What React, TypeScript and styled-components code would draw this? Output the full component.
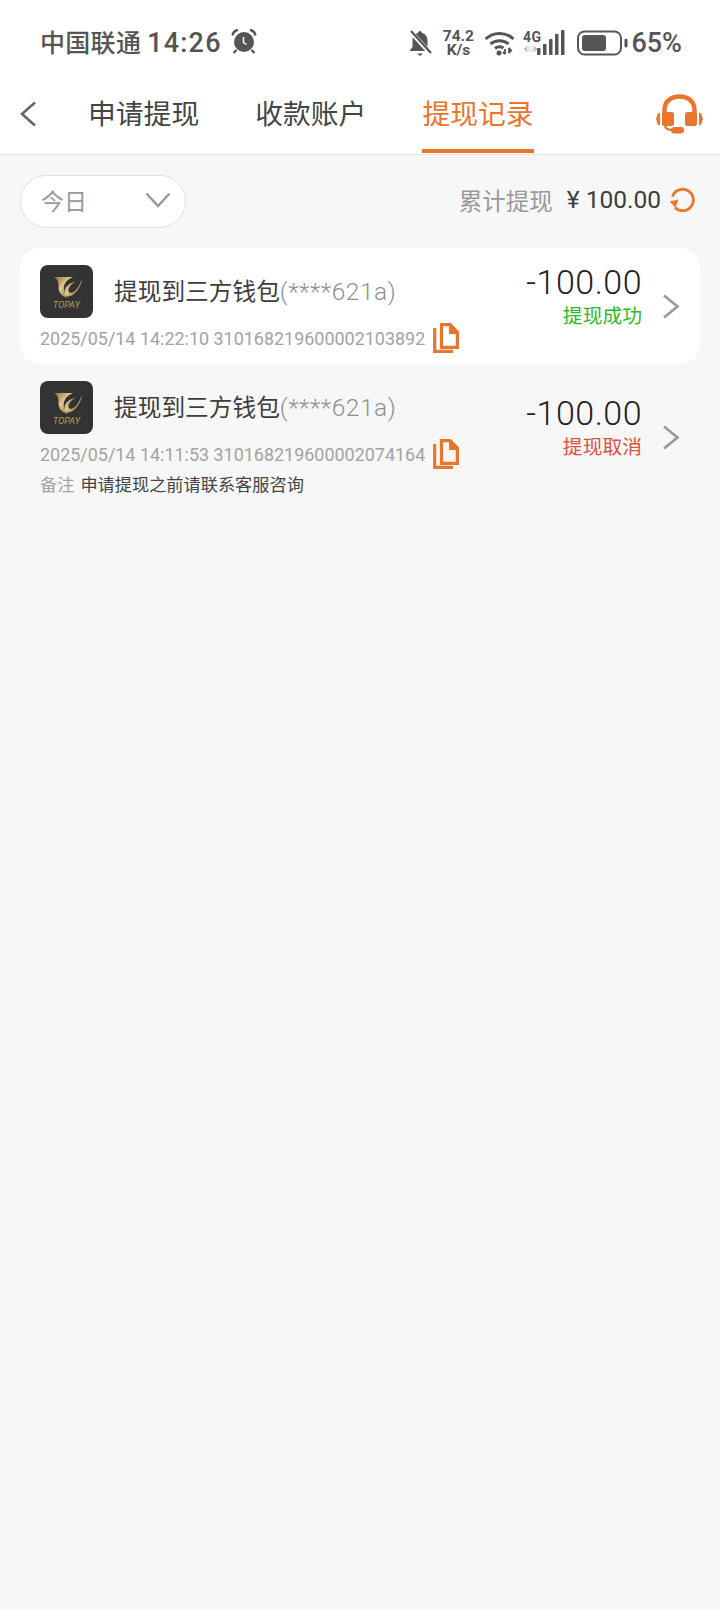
import React from 'react'
import styled, { createGlobalStyle } from 'styled-components'

const ORANGE = '#e8762d'
const FONT = `Roboto, "Noto Sans CJK SC", sans-serif`

const GlobalStyle = createGlobalStyle`
  html, body {
    margin: 0;
    padding: 0;
    background: #f7f7f7;
  }
  body {
    font-family: ${FONT};
  }
  * {
    box-sizing: border-box;
  }
`

const Page = styled.div`
  width: 720px;
  min-height: 1610px;
  background: #f7f7f7;
`

const Header = styled.header`
  background: #fff;
  border-bottom: 1px solid #e4e4e4;
`

const StatusBar = styled.div`
  height: 80px;
  padding: 2px 38px 0 40px;
  display: flex;
  align-items: center;
  justify-content: space-between;
  color: #555;
`

const StatusLeft = styled.div`
  display: flex;
  align-items: center;
  gap: 9px;
`

const Carrier = styled.span`
  font-size: 25px;
  font-weight: 500;
  letter-spacing: 0.3px;
`

const Clock = styled.span`
  margin-left: 6px;
  font-size: 27px;
  font-weight: 500;
  letter-spacing: 1.2px;
`

const StatusRight = styled.div`
  display: flex;
  align-items: center;
  padding-top: 3px;
`

const Speed = styled.div`
  width: 36px;
  margin: 0 8px 0 7px;
  font-weight: 700;
  text-align: center;
`

const SpeedLine = styled.span`
  display: block;
  font-size: 15.5px;
  line-height: 14px;
`

const WifiSlot = styled.span`
  display: flex;
  margin-right: 7px;
`

const SignalSlot = styled.span`
  display: flex;
  margin-right: 10px;
`

const Percent = styled.span`
  font-size: 27px;
  font-weight: 500;
  margin-left: 2px;
`

const Nav = styled.nav`
  height: 74px;
  padding: 0 17px 0 20px;
  display: flex;
  align-items: stretch;
`

const BackButton = styled.div`
  width: 68px;
  display: flex;
  align-items: center;
  padding-bottom: 6px;
`

const Tabs = styled.div`
  flex: 1;
  display: flex;
  gap: 56px;
`

const Tab = styled.div<{ $active?: boolean }>`
  display: flex;
  align-items: center;
  padding-bottom: 5px;
  font-size: 27.8px;
  color: ${(p) => (p.$active ? ORANGE : '#444')};
  border-bottom: 4px solid ${(p) => (p.$active ? ORANGE : 'transparent')};
  margin-bottom: 1px;
`

const HeadsetBox = styled.div`
  display: flex;
  align-items: center;
  padding-bottom: 6px;
`

const FilterBar = styled.div`
  padding: 20px 24px 20px 20px;
  display: flex;
  align-items: center;
  justify-content: space-between;
`

const DateSelect = styled.div`
  width: 166px;
  height: 53px;
  padding: 0 14px 3px 20px;
  background: #fff;
  border: 1.5px solid #e0e0e0;
  border-radius: 27px;
  display: flex;
  align-items: center;
  justify-content: space-between;
  font-size: 23px;
  color: #999;
`

const Total = styled.div`
  display: flex;
  align-items: center;
  padding-bottom: 4px;
  font-size: 23.5px;
  color: #999;
`

const TotalAmount = styled.span`
  margin: 0 8px 0 14px;
  font-size: 24.5px;
  color: #3d3d3d;
`

const Yen = styled.span`
  margin-right: 6px;
`

const List = styled.div`
  margin: 0 20px;
`

const Record = styled.div<{ $plain?: boolean }>`
  padding: 17px 20px 11px 20px;
  display: flex;
  align-items: center;
  background: ${(p) => (p.$plain ? 'transparent' : '#fff')};
  border-radius: 20px;
`

const Main = styled.div`
  flex: 1;
  min-width: 0;
`

const TitleRow = styled.div`
  display: flex;
  align-items: center;
  gap: 21px;
`

const Title = styled.div`
  padding-bottom: 4px;
  font-size: 23.7px;
  color: #3d3d3d;
  white-space: nowrap;
`

const Account = styled.span`
  font-size: 24.5px;
  font-weight: 300;
  letter-spacing: 0.5px;
  color: #909090;
`

const MetaRow = styled.div`
  margin-top: 5px;
  height: 30px;
  display: flex;
  align-items: center;
  gap: 8px;
  font-size: 17.95px;
  color: #a3a3a3;
  white-space: nowrap;
`

const Note = styled.div`
  margin-top: 2px;
  line-height: 28px;
  font-size: 17.2px;
  color: #444;
`

const NoteLabel = styled.span`
  margin-right: 6px;
  color: #a3a3a3;
`

const Side = styled.div`
  padding-bottom: 24px;
  margin-right: 20px;
  text-align: right;
`

const Amount = styled.div`
  font-size: 34px;
  line-height: 34px;
  font-weight: 300;
  letter-spacing: 0.5px;
  color: #222;
`

const Status = styled.div<{ $tone: string }>`
  margin-top: 6px;
  font-size: 19.8px;
  line-height: 24px;
  color: ${(p) => p.$tone};
`

const Chevron = styled.svg`
  flex: none;
  margin-bottom: 5px;
`

const CopySvg = styled.svg`
  flex: none;
`

const LogoSvg = styled.svg`
  flex: none;
`

const AlarmIcon = () => (
  <svg width="26" height="26" viewBox="0 0 26 26">
    <circle cx="13" cy="14" r="10" fill="#555" />
    <path d="M12.500 9v5.500l3 2" fill="none" stroke="#fff" strokeWidth="1.500" />
    <path d="M1.500 7.500C2 4.500 4 2.500 7 2M24.500 7.500C24 4.500 22 2.500 19 2M5.500 22l-3 3M20.500 22l3 3" stroke="#555" strokeWidth="2.400" fill="none" />
  </svg>
)

const BellOffIcon = () => (
  <svg width="25" height="28" viewBox="0 0 25 28">
    <path d="M12 2a2 2 0 0 1 2 2c4 1 5.500 4 5.500 8v6l3 4H1.500l3-4v-6c0-4 1.500-7 5.500-8a2 2 0 0 1 2-2Z" fill="#555" />
    <path d="M9 24.500h6L12 27Z" fill="#555" />
    <path d="M2 2l21 23" stroke="#fff" strokeWidth="4.500" />
    <path d="M3 2l20 22" stroke="#555" strokeWidth="2.200" />
  </svg>
)

const WifiIcon = () => (
  <svg width="32" height="26" viewBox="0 0 32 26">
    <g fill="none" stroke="#555" strokeWidth="3">
      <path d="M1.500 9C9.500 1.500 21.500 1.500 29.500 9" />
      <path d="M6.500 14c5-4.500 13-4.500 18 0" />
      <path d="M11 18.500c2.500-2 6-2 8.500-.5" />
    </g>
    <circle cx="15" cy="23" r="2.500" fill="#555" />
    <path d="M21 24v-5M21 24l-2-2M25 18v5" stroke="#555" strokeWidth="1.800" fill="none" />
    <path d="M25 17l3.500 3.500-3.500 3.500Z" fill="#555" />
  </svg>
)

// network type above the arrows, with the signal bars next to it
const SignalIcon = () => (
  <svg width="44" height="28" viewBox="0 0 44 28">
    <text x="0" y="13" fontFamily="Roboto, sans-serif" fontWeight="700" fontSize="14" fill="#555" textLength="18">4G</text>
    <path d="M1 20l3-3v6ZM6 17v6M9 17v6M11 17l3 3-3 3Z" fill="#c4c4c4" stroke="#c4c4c4" strokeWidth="0.800" />
    <g fill="#555">
      <rect x="14" y="19" width="3.500" height="7" rx="0.800" />
      <rect x="20" y="15" width="3.500" height="11" rx="0.800" />
      <rect x="26" y="10" width="3.500" height="16" rx="0.800" />
      <rect x="32" y="5" width="3.500" height="21" rx="0.800" />
      <rect x="38" y="1" width="3.500" height="25" rx="0.800" />
    </g>
  </svg>
)

const BatteryIcon = () => (
  <svg width="52" height="26" viewBox="0 0 52 26">
    <rect x="1" y="1.500" width="43" height="23" rx="6.500" fill="none" stroke="#555" strokeWidth="2" />
    <rect x="5" y="5" width="24" height="16" rx="3" fill="#555" />
    <rect x="47.500" y="8.500" width="3" height="9" rx="1.500" fill="#555" />
  </svg>
)

const BackIcon = () => (
  <svg width="17" height="26" viewBox="0 0 17 26">
    <path d="M15 1.500 2 13l13 11.500" fill="none" stroke="#666" strokeWidth="2.600" />
  </svg>
)

const HeadsetIcon = () => (
  <svg width="47" height="41" viewBox="0 0 47 41">
    <path d="M8.500 22V16C8.500 7.500 15 2.500 23.500 2.500S38.500 7.500 38.500 16v6" fill="none" stroke={ORANGE} strokeWidth="4.500" />
    <rect x="6" y="18" width="12" height="14" rx="2.500" fill={ORANGE} />
    <rect x="29" y="18" width="12" height="14" rx="2.500" fill={ORANGE} />
    <path d="M2 19 0 25l2 6h2V19ZM45 19l2 6-2 6h-2V19Z" fill={ORANGE} />
    <path d="M9 31c0 3.500 3 5 8 5" fill="none" stroke={ORANGE} strokeWidth="2.200" />
    <rect x="15" y="33" width="13" height="6.500" rx="3.250" fill={ORANGE} />
  </svg>
)

const DownIcon = () => (
  <svg width="26" height="16" viewBox="0 0 26 16">
    <path d="M1.500 1.500 13 14 24.500 1.500" fill="none" stroke="#999" strokeWidth="2.400" />
  </svg>
)

const RefreshIcon = () => (
  <svg width="27" height="27" viewBox="0 0 27 27">
    <path d="M3.500 10.500A10.700 10.700 0 1 1 6 21.500" fill="none" stroke={ORANGE} strokeWidth="2.800" />
    <path d="M1 14.500h9l-4.500 7.500Z" fill={ORANGE} transform="rotate(-12 5 17)" />
  </svg>
)

const CopyIcon = () => (
  <CopySvg width="26" height="30" viewBox="0 0 26 30">
    <path d="M1.700 5v23.300H20" fill="none" stroke={ORANGE} strokeWidth="3.200" />
    <path d="M8.500 1.600H16.500L24.400 9.500V24.400H8.500Z" fill="none" stroke={ORANGE} strokeWidth="3.200" />
    <path d="M16 0h1.500L26 8.500V11H16Z" fill={ORANGE} />
  </CopySvg>
)

const RowArrow = () => (
  <Chevron width="18" height="25" viewBox="0 0 18 25">
    <path d="M2 1.500 15.500 12.500 2 23.500" fill="none" stroke="#999" strokeWidth="2.600" />
  </Chevron>
)

// wallet badge, a gold swoosh on a dark tile
const WalletLogo = ({ id }: { id: string }) => (
  <LogoSvg width="53" height="53" viewBox="0 0 53 53">
    <defs>
      <linearGradient id={id} x1="0" y1="0" x2="1" y2="1">
        <stop offset="0" stopColor="#8a6d35" />
        <stop offset="0.45" stopColor="#e3c98c" />
        <stop offset="1" stopColor="#6f5728" />
      </linearGradient>
    </defs>
    <rect width="53" height="53" rx="8" fill="#333333" />
    <path d="M14 12H33C28 14 25 17 24 21 23 26 25 30 28 33 22 32 18 27 18.500 21 19 17 17.500 14 14 12Z" fill={`url(#${id})`} />
    <path d="M42 14C41 22 35 31 28 31.500 25 31.500 24 29 24.500 26 25 21 30 18 36 16.500 31 19 28 23 28.500 26 29 28 31 28.500 33.500 27 37.500 25 40 19 42 14Z" fill={`url(#${id})`} />
    <text x="13" y="43" fontFamily="Roboto, sans-serif" fontStyle="italic" fontSize="9" textLength="27" fill="#b89c5e">TOPAY</text>
  </LogoSvg>
)

interface WithdrawRecord {
  id: string
  time: string
  orderNo: string
  status: string
  tone: string
  plain?: boolean
  note?: string
}

const records: WithdrawRecord[] = [
  { id: 'a', time: '2025/05/14 14:22:10', orderNo: '310168219600002103892', status: '提现成功', tone: '#2db82d' },
  {
    id: 'b',
    time: '2025/05/14 14:11:53',
    orderNo: '310168219600002074164',
    status: '提现取消',
    tone: '#dc5145',
    plain: true,
    note: '申请提现之前请联系客服咨询',
  },
]

const App: React.FC = () => {
  return (
    <Page>
      <GlobalStyle />
      <Header>
        <StatusBar>
          <StatusLeft>
            <span>
              <Carrier>中国联通</Carrier>
              <Clock>14:26</Clock>
            </span>
            <AlarmIcon />
          </StatusLeft>
          <StatusRight>
            <BellOffIcon />
            <Speed>
              <SpeedLine>74.2</SpeedLine>
              <SpeedLine>K/s</SpeedLine>
            </Speed>
            <WifiSlot>
              <WifiIcon />
            </WifiSlot>
            <SignalSlot>
              <SignalIcon />
            </SignalSlot>
            <BatteryIcon />
            <Percent>65%</Percent>
          </StatusRight>
        </StatusBar>
        <Nav>
          <BackButton>
            <BackIcon />
          </BackButton>
          <Tabs>
            <Tab>申请提现</Tab>
            <Tab>收款账户</Tab>
            <Tab $active>提现记录</Tab>
          </Tabs>
          <HeadsetBox>
            <HeadsetIcon />
          </HeadsetBox>
        </Nav>
      </Header>
      <FilterBar>
        <DateSelect>
          今日
          <DownIcon />
        </DateSelect>
        <Total>
          累计提现
          <TotalAmount>
            <Yen>¥</Yen>100.00
          </TotalAmount>
          <RefreshIcon />
        </Total>
      </FilterBar>
      <List>
        {records.map((r) => (
          <Record key={r.id} $plain={r.plain}>
            <Main>
              <TitleRow>
                <WalletLogo id={`logo-${r.id}`} />
                <Title>
                  提现到三方钱包<Account>(****621a)</Account>
                </Title>
              </TitleRow>
              <MetaRow>
                {r.time} {r.orderNo}
                <CopyIcon />
              </MetaRow>
              {r.note && (
                <Note>
                  <NoteLabel>备注</NoteLabel>
                  {r.note}
                </Note>
              )}
            </Main>
            <Side>
              <Amount>-100.00</Amount>
              <Status $tone={r.tone}>{r.status}</Status>
            </Side>
            <RowArrow />
          </Record>
        ))}
      </List>
    </Page>
  )
}

export default App
